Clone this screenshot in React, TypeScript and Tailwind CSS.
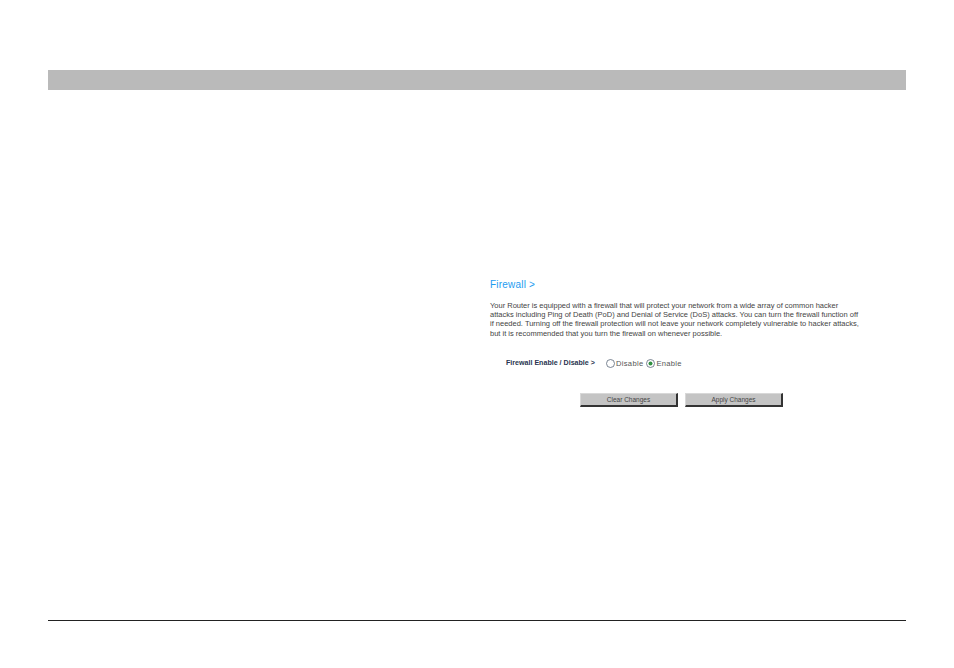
import React from "react";

const Radio: React.FC<{ checked?: boolean }> = ({ checked }) => (
  <svg width="9" height="9" viewBox="0 0 9 9" className="shrink-0">
    <circle cx="4.5" cy="4.5" r="4" fill="#fff" stroke="#5a6878" strokeWidth="0.8" />
    {checked && <circle cx="4.5" cy="4.5" r="2" fill="#2f8f3f" />}
  </svg>
);

const FormButton: React.FC<{ label: string }> = ({ label }) => (
  <div className="flex h-[14px] w-[98px] items-center justify-center border border-t-[#d8d8d8] border-l-[#d8d8d8] border-r-2 border-b-2 border-r-[#333] border-b-[#333] bg-[#c4c4c4] text-[6.5px] text-[#444]">
    {label}
  </div>
);

export default function App() {
  return (
    <div className="flex h-[668px] w-[954px] flex-col bg-white px-[48px] pt-[70px] font-['Liberation_Sans',sans-serif]">
      <div className="h-[20px] bg-[#bababa]" />

      <div className="mt-[189px] ml-[442px] h-[341px]">
        <div className="text-[10px] leading-[12px] font-medium tracking-[0.2px] text-[#1e9bf0]">Firewall &gt;</div>

        <p className="mt-[9.5px] whitespace-nowrap text-[7.5px] leading-[9.4px] text-[#444]">
          Your Router is equipped with a firewall that will protect your network from a wide array of common hacker<br />
          attacks including Ping of Death (PoD) and Denial of Service (DoS) attacks. You can turn the firewall function off<br />
          if needed. Turning off the firewall protection will not leave your network completely vulnerable to hacker attacks,<br />
          but it is recommended that you turn the firewall on whenever possible.
        </p>

        <div className="mt-[19.5px] ml-[16px] flex h-[12px] items-center text-[7.6px] tracking-[0.3px] text-[#555]">
          <span className="w-[100px] text-[7.1px] font-bold tracking-normal text-[#2a3550]">Firewall Enable / Disable &gt;</span>
          <span className="flex items-center gap-[1px]">
            <Radio />
            <span>Disable</span>
          </span>
          <span className="ml-[3px] flex items-center gap-[1px]">
            <Radio checked />
            <span>Enable</span>
          </span>
        </div>

        <div className="mt-[23.5px] ml-[90px] flex gap-[7px]">
          <FormButton label="Clear Changes" />
          <FormButton label="Apply Changes" />
        </div>
      </div>

      <div className="h-px bg-[#222]" />
    </div>
  );
}
